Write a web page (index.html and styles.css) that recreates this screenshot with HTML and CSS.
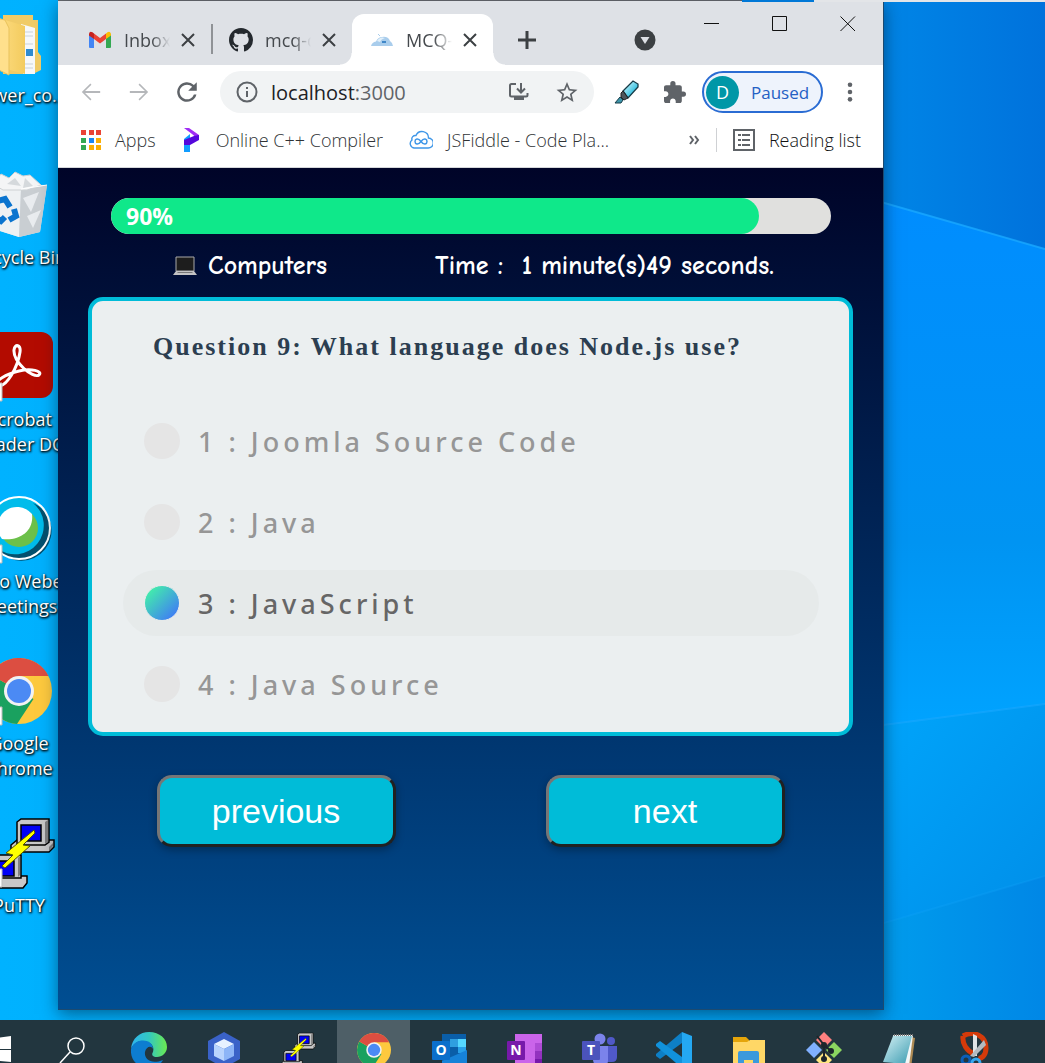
FILE: index.html
```html
<!DOCTYPE html>
<html lang="en">
<head>
<meta charset="utf-8">
<title>MCQ-App</title>
<meta name="viewport" content="width=device-width, initial-scale=1">
<link rel="stylesheet" href="styles.css">
</head>
<body>
<svg class="defs" aria-hidden="true">
  <defs>
    <linearGradient id="sky" x1="0" y1="0" x2="1" y2="0">
      <stop offset="0" stop-color="#00b2ff"/><stop offset=".5" stop-color="#00a8f4"/><stop offset=".86" stop-color="#009aec"/><stop offset="1" stop-color="#0087e6"/>
    </linearGradient>
    <linearGradient id="skyTop" x1="0" y1="0" x2="1" y2="0">
      <stop offset="0" stop-color="#0088e8"/><stop offset="1" stop-color="#0072dc"/>
    </linearGradient>
    <linearGradient id="beamA" x1="0" y1="0" x2="0" y2="1">
      <stop offset="0" stop-color="#008dff"/><stop offset=".65" stop-color="#0094f2"/><stop offset="1" stop-color="#00a3ff"/>
    </linearGradient>
    <linearGradient id="beamB" x1="0" y1="0" x2="1" y2="1">
      <stop offset="0" stop-color="#00a6fc"/><stop offset="1" stop-color="#008ee8"/>
    </linearGradient>
    <linearGradient id="folder" x1="0" y1="0" x2="1" y2="0">
      <stop offset="0" stop-color="#ffdf86"/><stop offset="1" stop-color="#f3cb5e"/>
    </linearGradient>
    <linearGradient id="pen" x1="0" y1="0" x2="1" y2="1">
      <stop offset=".2" stop-color="#b9f0fb"/><stop offset=".8" stop-color="#18b4d8"/>
    </linearGradient>
    <linearGradient id="edgeTop" x1="0" y1="0" x2="1" y2="0">
      <stop offset="0" stop-color="#2fb4f0"/><stop offset=".5" stop-color="#33c8c0"/><stop offset="1" stop-color="#6bea4f"/>
    </linearGradient>
    <linearGradient id="note" x1="0" y1="0" x2="1" y2="1">
      <stop offset="0" stop-color="#d5f1f5"/><stop offset="1" stop-color="#3a9bb0"/>
    </linearGradient>
    <symbol id="chrome" viewBox="0 0 66 66">
      <circle cx="33" cy="33" r="33" fill="#fdc93e"/>
      <path d="M33 33 4.500 16.500A33 33 0 0 0 31 66L47.500 41z" fill="#1aa15f"/>
      <path d="M33 33 4.500 16.500A33 33 0 0 1 62.500 18H33z" fill="#dc4e41"/>
      <circle cx="33" cy="33" r="15" fill="#f2f2f2"/>
      <circle cx="33" cy="33" r="12" fill="#4b8af4"/>
    </symbol>
    <symbol id="putty" viewBox="0 0 74 72">
      <g stroke="#000" stroke-width="1.500">
        <path d="M28 27 34 22H71V29L66 34H28z" fill="#c8c8c8"/>
        <path d="M34 4 38 1H66V24L62 27H34z" fill="#c8c8c8"/>
        <path d="M38 7H58V23H38z" fill="#0000f5"/>
        <path d="M1 63 6 58H44V65L40 70H1z" fill="#c8c8c8"/>
        <path d="M6 40 10 37H38V60H6z" fill="#c8c8c8"/>
        <path d="M10 43H31V58H10z" fill="#0000f5"/>
      </g>
      <path d="M62 4 65 2V24L62 26zM66 29 70 25V28L66 33zM35 40 37 38V57L35 59z" fill="#808080"/>
      <path d="M51 12 52 15 40 27 47 28 22 50 19 48 30 37 23 35z" fill="#ff0" stroke="#555500"/>
    </symbol>
  </defs>
</svg>

<main class="desktop">
  <svg class="wallpaper" viewBox="0 0 1045 1020" preserveAspectRatio="none" aria-hidden="true">
    <path fill="url(#sky)" d="M0 0H1045V1020H0z"/>
    <path fill="url(#skyTop)" d="M860 0H1045V249L860 196z"/>
    <path fill="url(#beamA)" d="M860 196 1045 249V704L860 728z"/>
    <path fill="url(#beamB)" d="M860 728 1045 704V876L860 930z"/>
    <g fill="none" stroke="#19a8ff" stroke-width="2"><path d="M860 196 1045 249" opacity=".8"/><path d="M860 728 1045 704" opacity=".6"/><path d="M860 930 1045 876" opacity=".2"/></g>
  </svg>

  <div class="top-edge"><span class="edge-dark"></span><span class="edge-blue"></span><span class="edge-light"></span></div>

  <div class="workspace">
    <nav class="shortcuts" aria-label="Desktop shortcuts">
      <a class="shortcut" href="#folder">
        <svg viewBox="0 0 72 72"><path d="M20 7H50V12H55V44L58 48V62L50 66H20z" fill="#f0cb67"/><path d="M38 16 52 20V66L40 66z" fill="#f6f8fa"/><path d="M42 24h8M42 28h8M42 36h8M42 56h8M42 60h8" stroke="#c9d2da"/><path d="M43 41h7v7h-7z" fill="#2f8bd0"/><path d="M12 9 42 18V66L20 60z" fill="url(#folder)"/><path d="M8 9 22 12 26 20V67L8 58z" fill="#ffe08c" stroke="#e9c35c"/></svg>
        <span>Power_co...</span>
      </a>
      <a class="shortcut" href="#bin">
        <svg viewBox="0 0 72 72"><path d="M6 14 64 15 57 62 36 67 14 60z" fill="#dfe4e8"/><path d="M6 14 38 19 36 67 14 60z" fill="#eef1f3"/><path d="M38 19 64 15 57 62 36 67z" fill="#c9ced2"/><path d="M40 28 56 22 48 42zM44 46 58 40 50 58z" fill="#e9ecef"/><path d="M10 14 18 4 26 8 32 2 40 6 47 5 58 15 44 20 20 20z" fill="#f4f5f6" stroke="#cdd1d4"/><path d="M24 14 32 8 38 16zM42 8 50 16 40 18z" fill="#d5d9dc"/><path d="M38 19 64 15" stroke="#fff"/><path d="M15 31 22 29 27 37M31 39 33 46 26 50M12 47 18 51 22 47" fill="none" stroke="#0a74cf" stroke-width="6"/></svg>
        <span>Recycle Bin</span>
      </a>
      <a class="shortcut" href="#acrobat">
        <svg viewBox="0 0 72 72"><rect x="4" width="66" height="66" rx="12" fill="#b30b00"/><path d="M14 54C10 49 24 42 36 39 48 36 60 39 56 43 50 47 30 30 31 18 32 11 38 13 37 20 35 34 24 56 14 54z" fill="none" stroke="#fff" stroke-width="3"/><path d="M1 51h18v18H1z" fill="#fff" stroke="#bbb"/></svg>
        <span>Acrobat<br>Reader DC</span>
      </a>
      <a class="shortcut" href="#webex">
        <svg viewBox="0 0 72 72"><circle cx="36" cy="34" r="31" fill="#00bceb"/><path d="M50 9A30 30 0 1 1 14 54 21 21 0 0 0 50 9z" fill="#04506e"/><circle cx="36" cy="34" r="19" fill="#6cc04a"/><path d="M49 20A19 19 0 0 0 19 45C38 47 51 36 49 20z" fill="#fff"/><circle cx="36" cy="34" r="31" fill="none" stroke="#fff" stroke-width="2"/><path d="M1 51h18v18H1z" fill="#fff" stroke="#bbb"/></svg>
        <span>Cisco Webex<br>Meetings</span>
      </a>
      <a class="shortcut" href="#chrome-app">
        <svg viewBox="0 0 72 72"><use href="#chrome" x="3" y="2" width="66" height="66"/><path d="M1 51h18v18H1z" fill="#fff" stroke="#bbb"/></svg>
        <span>Google<br>Chrome</span>
      </a>
      <a class="shortcut" href="#putty-app">
        <svg viewBox="0 0 72 72"><use href="#putty" width="74" height="72"/><path d="M1 51h18v18H1z" fill="#fff" stroke="#bbb"/></svg>
        <span>PuTTY</span>
      </a>
    </nav>

    <section class="window" aria-label="Browser window">
      <header class="tab-strip">
        <div class="tab">
          <svg viewBox="0 0 24 24"><path d="M1 5.500V19q0 1 1 1H6V10z" fill="#4285f4"/><path d="M18 10V20H22q1 0 1-1V5.500z" fill="#34a853"/><path d="M18 5.500V11L23 7.500V6Q22 2.500 19.500 4.200z" fill="#fbbc04"/><path d="M6 11V5.500L12 10 18 5.500V11L12 15.500z" fill="#ea4335"/><path d="M1 6V7.500L6 11V5.500L4.500 4.200Q1.500 2.500 1 6z" fill="#c5221f"/></svg>
          <span class="tab-title">Inbox (2)</span>
          <button class="tab-close" aria-label="Close tab"><svg viewBox="0 0 22 22"><path d="M5 5 17 17M17 5 5 17"/></svg></button>
        </div>
        <div class="tab tab-divided">
          <svg viewBox="0 0 16 16"><path fill="#24292e" d="M8 0C3.580 0 0 3.580 0 8c0 3.540 2.290 6.530 5.470 7.590.4.070.55-.17.55-.38 0-.19-.01-.82-.01-1.490-2.010.37-2.530-.49-2.690-.94-.09-.23-.48-.94-.82-1.130-.28-.15-.68-.52-.01-.53.63-.01 1.080.58 1.230.82.72 1.210 1.870.87 2.330.66.07-.52.28-.87.51-1.070-1.780-.2-3.640-.89-3.640-3.950 0-.87.31-1.590.82-2.150-.08-.2-.36-1.020.08-2.120 0 0 .67-.21 2.200.82.64-.18 1.320-.27 2-.27s1.360.09 2 .27c1.530-1.040 2.200-.82 2.200-.82.44 1.100.16 1.920.08 2.120.51.56.82 1.270.82 2.150 0 3.070-1.870 3.750-3.650 3.950.29.25.54.73.54 1.480 0 1.070-.01 1.930-.01 2.200 0 .21.15.46.55.38A8.010 8.010 0 0 0 16 8c0-4.420-3.580-8-8-8z"/></svg>
          <span class="tab-title">mcq-demo</span>
          <button class="tab-close" aria-label="Close tab"><svg viewBox="0 0 22 22"><path d="M5 5 17 17M17 5 5 17"/></svg></button>
        </div>
        <div class="tab tab-active">
          <svg viewBox="0 0 24 24"><path d="M1 18Q2 14 6 13.500 8 9 12 9 18 8 20 13 23 15 23 18z" fill="#a9cdec"/><path d="M7 13Q10 8 15 10 11 11 10 14z" fill="#e2f0fa"/><path d="M12 13h4v2h-4z" fill="#3f87c8"/><path d="M8 6l2 2" stroke="#a9cdec"/></svg>
          <span class="tab-title">MCQ-App</span>
          <button class="tab-close" aria-label="Close tab"><svg viewBox="0 0 22 22"><path d="M5 5 17 17M17 5 5 17"/></svg></button>
        </div>
        <button class="new-tab" aria-label="New tab"><svg viewBox="0 0 20 20"><path d="M10 1V19M1 10H19"/></svg></button>
        <button class="tab-search" aria-label="Search tabs"><svg viewBox="0 0 22 22"><circle cx="11" cy="11" r="10.500" fill="#3c4043"/><path d="M6.500 8H15.500L11 15z" fill="#dee1e6"/></svg></button>
        <div class="controls">
          <button aria-label="Minimize"><svg viewBox="0 0 16 16"><path d="M0 7.500H15"/></svg></button>
          <button aria-label="Maximize"><svg viewBox="0 0 16 16"><path d="M.5 .5H14.500V14.500H.5z"/></svg></button>
          <button aria-label="Close"><svg viewBox="0 0 16 16"><path d="M.5 .5 15 15M15 .5 .5 15"/></svg></button>
        </div>
      </header>

      <div class="toolbar">
        <button class="tool faded" aria-label="Back"><svg viewBox="0 0 24 24"><path d="M22 11H5.500L12.500 4 11.300 2.700 2 12l9.300 9.300 1.200-1.300-7-7H22z"/></svg></button>
        <button class="tool faded" aria-label="Forward"><svg viewBox="0 0 24 24"><path d="M2 11H18.500L11.500 4 12.700 2.700 22 12l-9.300 9.300-1.200-1.300 7-7H2z"/></svg></button>
        <button class="tool" aria-label="Reload"><svg viewBox="3 3 18 18"><path d="M17.650 6.350A8 8 0 1 0 19.730 14h-2.080A6 6 0 1 1 12 6c1.660 0 3.140.69 4.220 1.780L13 11h7V4z"/></svg></button>
        <div class="omnibox">
          <svg viewBox="0 0 22 22"><circle cx="11" cy="11" r="9.500" fill="none" stroke="#5f6368" stroke-width="2"/><path d="M10 10h2v6h-2zM10 6h2v2h-2z"/></svg>
          <span class="address"><b>localhost</b>:3000</span>
          <button aria-label="Install app"><svg viewBox="0 0 22 22"><path d="M8 3H3.500Q2 3 2 4.500V14q0 1.500 1.500 1.500H18q1.500 0 1.500-1.500V12M13 2V11M9 7.500 13 11.500 17 7.500" fill="none" stroke="#5f6368" stroke-width="2"/><path d="M6 16h10v3H6z"/></svg></button>
          <button aria-label="Bookmark this page"><svg viewBox="2 1 20 21"><path d="M22 9.240l-7.190-.62L12 2 9.190 8.630 2 9.240l5.460 4.730L5.820 21 12 17.270 18.180 21l-1.630-7.030zM12 15.400l-3.760 2.270 1-4.280-3.320-2.880 4.380-.38L12 6.100l1.710 4.040 4.380.38-3.320 2.880 1 4.280z"/></svg></button>
        </div>
        <button class="tool" aria-label="Highlighter"><svg class="wide" viewBox="0 0 26 26"><path d="M9 12 19 2 24 5V8L14 19z" fill="url(#pen)" stroke="#173b47" stroke-width="1.300"/><path d="M9 12 14 19 10 21 7 18V14z" fill="#4c555b" stroke="#222"/><path d="M6 18 9 21 7 24H1z" fill="#3d95aa" stroke="#173b47"/></svg></button>
        <button class="tool" aria-label="Extensions"><svg viewBox="2 1 21 21"><path d="M20.500 11H19V7c0-1.100-.9-2-2-2h-4V3.500a2.500 2.500 0 0 0-5 0V5H4c-1.100 0-2 .9-2 2v3.800h1.500c1.490 0 2.700 1.210 2.700 2.700s-1.210 2.700-2.700 2.700H2V20c0 1.100.9 2 2 2h3.800v-1.500c0-1.490 1.210-2.700 2.700-2.700s2.700 1.210 2.700 2.700V22H17c1.100 0 2-.9 2-2v-4h1.500a2.500 2.500 0 0 0 0-5z"/></svg></button>
        <button class="profile"><span class="avatar">D</span><span class="profile-state">Paused</span></button>
        <button class="tool" aria-label="Menu"><svg viewBox="0 0 24 24"><circle cx="12" cy="4" r="2.500"/><circle cx="12" cy="12" r="2.500"/><circle cx="12" cy="20" r="2.500"/></svg></button>
      </div>

      <nav class="bookmarks" aria-label="Bookmarks">
        <a href="#apps"><svg class="i20" viewBox="0 0 20 20"><path d="M0 0h5v5H0zM8 0h5v5H8zM15 0h5v5h-5z" fill="#ea4335"/><path d="M0 8h5v5H0zM0 15h5v5H0z" fill="#34a853"/><path d="M8 8h5v5H8z" fill="#1a87f4"/><path d="M15 8h5v5h-5zM8 15h5v5H8zM15 15h5v5h-5z" fill="#fbaf04"/></svg>Apps</a>
        <a href="#cpp"><svg class="i20" viewBox="0 0 20 24"><path d="M2 11 8 6V24H2z" fill="#119dff"/><path d="M2 0H7L17 7V12L10 6z" fill="#a02df5"/><path d="M2 17V12L12 8 17 7V12L8 17z" fill="#5507dc"/></svg>Online C++ Compiler</a>
        <a href="#jsfiddle"><svg class="i24" viewBox="0 0 24 24"><path d="M5 20a4.500 4.500 0 0 1-2-8 3.500 3.500 0 0 1 4-4.500A6.500 6.500 0 0 1 19.500 10 5 5 0 0 1 19 20z" fill="none" stroke="#3f97e8" stroke-width="1.400"/><path d="M12 13.500C9 9.500 6 11 6 13.500S9 17.500 12 13.500 18 11 18 13.500 15 17.500 12 13.500z" fill="none" stroke="#3f97e8" stroke-width="1.500"/></svg>JSFiddle - Code Pla...</a>
        <button class="overflow" aria-label="More bookmarks"><svg viewBox="0 0 12 12"><path d="M2 2 5 6 2 10M7 2 10 6 7 10"/></svg></button>
        <a class="reading" href="#reading"><svg class="i22" viewBox="0 0 22 22"><path d="M1 1H21V21H1z" fill="none" stroke="#5f6368" stroke-width="2"/><path d="M5 5h3v2H5zM5 10h3v2H5zM5 15h3v2H5zM9 5h8v2H9zM9 10h8v2H9zM9 15h8v2H9z" fill="#5f6368"/></svg>Reading list</a>
      </nav>

      <div class="page">
        <div class="progress" role="progressbar" aria-valuenow="90" aria-valuemin="0" aria-valuemax="100">
          <div class="progress-fill" style="width:90%">90%</div>
        </div>
        <div class="info">
          <span class="category"><svg viewBox="0 0 26 20"><path d="M4 1H22V15H4z" fill="#1d1d1d" stroke="#a9a9a9"/><path d="M4 15H22L25 19H1z" fill="#c3c3c3"/><path d="M6 16h14l1 1H5z" fill="#777"/></svg>Computers</span>
          <span class="timer">Time :&nbsp; 1 minute(s)49 seconds.</span>
        </div>
        <form class="card">
          <h1 class="question">Question 9: What language does Node.js use?</h1>
          <label class="option"><input type="radio" name="answer">1 : Joomla Source Code</label>
          <label class="option"><input type="radio" name="answer">2 : Java</label>
          <label class="option"><input type="radio" name="answer" checked>3 : JavaScript</label>
          <label class="option"><input type="radio" name="answer">4 : Java Source</label>
        </form>
        <div class="actions">
          <button type="button">previous</button>
          <button type="button">next</button>
        </div>
      </div>
    </section>
  </div>
</main>

<footer class="taskbar">
  <button aria-label="Start"><svg viewBox="0 0 36 36"><path d="M6 7 17 5.500V17H6zM18 5.500 30 4V17H18zM6 18H17V29L6 28zM18 18H30V30L18 29z" fill="#fff"/></svg></button>
  <button aria-label="Search"><svg viewBox="0 0 36 36"><circle cx="20" cy="14" r="8" fill="none" stroke="#fff" stroke-width="1.500"/><path d="M14 20 4 31" stroke="#fff" stroke-width="1.500"/></svg></button>
  <button aria-label="Edge"><svg viewBox="0 0 36 36"><path d="M0 17C1 6 9 0 18 0 29 0 36 7 36 15 36 21 31 25 26 25 22 25 20 23 22 20 24 14 19 9 12 9 6 9 2 12 0 17z" fill="url(#edgeTop)"/><path d="M0 17C2 11 7 8.500 12 8.500 18 8.500 22 12 22 17 20 13 15 15 14 20 13 27 20 33 32 28 29 34 23 36 18 36 7 36-1 28 0 17z" fill="#0d7dd0"/></svg></button>
  <button aria-label="Virtual machine"><svg viewBox="0 0 36 36"><path d="M18 0 34 9V27L18 36 2 27V9z" fill="#3a62c8"/><path d="M18 7 28 12 18 17 8 12z" fill="#e8f2ff"/><path d="M8 12 18 17V29L8 24z" fill="#b9d4fd"/><path d="M28 12 18 17V29L28 24z" fill="#8db5f7"/></svg></button>
  <button aria-label="PuTTY"><svg viewBox="0 0 74 72"><use href="#putty" width="74" height="72"/></svg></button>
  <button class="running" aria-label="Chrome"><svg viewBox="0 0 36 36"><use href="#chrome" x="1" y="1" width="34" height="34"/></svg></button>
  <button aria-label="Outlook"><svg viewBox="0 0 36 36"><path d="M11 2H35V30H11z" fill="#0a5ea8"/><path d="M19 7h8v8h-8z" fill="#2f9fe0"/><path d="M27 7h8v8h-8z" fill="#55d8ff"/><path d="M27 15h8v6h-8z" fill="#28a0e8"/><path d="M11 29 36 18V36H11z" fill="#1682d8"/><rect x="1" y="9" width="18" height="19" rx="1" fill="#0b6fcb"/><text x="10" y="23" text-anchor="middle">O</text></svg></button>
  <button aria-label="OneNote"><svg viewBox="0 0 36 36"><path d="M9 2H36V36H9z" fill="#ca64ea"/><path d="M29 11h7v8h-7z" fill="#ae4bd5"/><path d="M29 19h7v8h-7z" fill="#9332bf"/><path d="M29 27h7v9h-7z" fill="#7719aa"/><rect x="1" y="9" width="18" height="19" rx="1" fill="#7719aa"/><text x="10" y="23" text-anchor="middle">N</text></svg></button>
  <button aria-label="Teams"><svg viewBox="0 0 36 36"><circle cx="30" cy="9" r="4" fill="#5059c9"/><circle cx="19" cy="7" r="5.500" fill="#7b83eb"/><path d="M26 14H36V25q0 5-5 5h-5z" fill="#5059c9"/><path d="M12 14H27V28q0 7-7 7t-8-7z" fill="#7b83eb"/><rect x="1" y="9" width="18" height="19" rx="1" fill="#4b53bc"/><text x="10" y="23" text-anchor="middle">T</text></svg></button>
  <button aria-label="Visual Studio Code"><svg viewBox="0 0 36 36"><path d="M26 0 36 4V32L26 36z" fill="#24a8f2"/><path d="M26 0V11L4 27 0 24V22z" fill="#0d7fc6"/><path d="M26 36V25L4 9 0 12V14z" fill="#1192dc"/></svg></button>
  <button aria-label="File Explorer"><svg viewBox="0 0 36 36"><path d="M2 5h13l3 3v3H2z" fill="#e5a50a"/><path d="M2 10 16 10 19 8H34V32H2z" fill="#ffd766"/><path d="M7 36V21q0-2 2-2H26q2 0 2 2V36H22V28H13V36z" fill="#3b99dc"/></svg></button>
  <button aria-label="Git Bash"><svg viewBox="0 0 36 36"><path d="M18 0 26 8 18 16 10 8z" fill="#ff8080"/><path d="M8 10 16 18 8 26 0 18z" fill="#80b0ff"/><path d="M28 10 36 18 28 26 20 18z" fill="#8bd560"/><path d="M18 20 26 28 18 36 10 28z" fill="#ffe680"/><path d="M11 4 18 13V28M18 13 25 19" stroke="#1c262b" stroke-width="2" fill="none"/><circle cx="18" cy="27" r="3" fill="#1c262b"/><circle cx="25" cy="19" r="3" fill="#1c262b"/><circle cx="18" cy="13" r="3" fill="#1c262b"/></svg></button>
  <button aria-label="Notepad"><svg viewBox="0 0 36 36"><path d="M30 5 34 6 30 36H26z" fill="#ae8b54"/><path d="M12 3H32L28 34 22 36z" fill="#f3f7f8"/><path d="M12 4H31L24 32 2 30z" fill="url(#note)"/><path d="M13 3h19" stroke="#777" stroke-width="2" stroke-dasharray="1 1"/></svg></button>
  <button aria-label="Snipping Tool"><svg viewBox="0 0 36 36"><path d="M7 4C18-2 30 4 30 16 30 24 25 27 22 26M7 4C6 12 11 19 18 22" fill="none" stroke="#d43a0a" stroke-width="5"/><path d="M17 2 21 4V24H17z" fill="#dfe3e6"/><path d="M28 8 14 24 18 25 30 13z" fill="#b4babf"/><circle cx="10" cy="28" r="4" fill="none" stroke="#0b5fb8" stroke-width="3"/><circle cx="20" cy="31" r="4" fill="none" stroke="#35a7ee" stroke-width="3"/></svg></button>
</footer>
</body>
</html>
```
FILE: styles.css
```css
* { box-sizing: border-box; }

body {
  margin: 0;
  height: 100vh;
  min-height: 640px;
  display: flex;
  flex-direction: column;
  overflow: hidden;
  font-family: "Open Sans", "Noto Sans", sans-serif;
  font-size: 18px;
}

button {
  margin: 0;
  padding: 0;
  border: 0;
  background: none;
  font: inherit;
  color: inherit;
}

svg { flex: none; }
a { color: inherit; text-decoration: none; }
.defs { position: absolute; width: 0; height: 0; }

/* Desktop */
.desktop {
  position: relative;
  flex: 1;
  min-height: 0;
  display: flex;
  flex-direction: column;
  overflow: hidden;
}
.wallpaper { position: absolute; inset: 0; width: 100%; height: 100%; }

.top-edge { position: relative; display: flex; height: 1px; padding-left: 58px; }
.edge-dark { flex: 1; background: #6b6c6f; }
.edge-blue { width: 72px; height: 2px; background: #0078d7; z-index: 1; }
.edge-light { width: 231px; height: 2px; background: #e3e5e8; z-index: 1; }

.workspace {
  position: relative;
  flex: 1;
  min-height: 0;
  display: flex;
  padding: 0 161px 10px 0;
}

.shortcuts {
  flex: none;
  width: 58px;
  padding-top: 7px;
  overflow: hidden;
  display: grid;
  grid-auto-rows: 162px;
  align-content: start;
}
.shortcut {
  width: 122px;
  margin-left: -42px;
  display: flex;
  flex-direction: column;
  align-items: center;
  color: #fff;
  line-height: 25px;
  text-align: center;
  text-shadow: 1px 1px 2px #000, 0 1px 3px #000;
}
.shortcut svg { width: 72px; height: 72px; margin-bottom: 3px; }

/* Browser window */
.window {
  flex: 1;
  min-width: 0;
  display: flex;
  flex-direction: column;
  border-right: 1px solid #1c4a70;
  border-bottom: 1px solid #1c4a70;
  background: #fff;
  box-shadow: 0 4px 16px rgba(0, 20, 40, .5);
}

.tab-strip {
  flex: none;
  height: 64px;
  padding-left: 12px;
  display: flex;
  align-items: flex-end;
  background: #dee1e6;
}
.tab {
  position: relative;
  width: 141px;
  height: 51px;
  padding-left: 18px;
  display: flex;
  align-items: center;
  color: #45494d;
}
.tab > svg { width: 24px; height: 24px; }
.tab-title {
  width: 46px;
  margin: 0 7px 0 12px;
  overflow: hidden;
  white-space: nowrap;
  mask-image: linear-gradient(90deg, #000 60%, transparent);
}
.tab-close { width: 22px; height: 22px; }
.tab-close svg { display: block; stroke: #3c4043; stroke-width: 2; }
.tab-divided::before {
  content: "";
  position: absolute;
  left: 0;
  top: 10px;
  width: 2px;
  height: 30px;
  background: #8f9296;
}
.tab-active { background: #fff; border-radius: 12px 12px 0 0; }
.tab-active::before,
.tab-active::after {
  content: "";
  position: absolute;
  bottom: 0;
  width: 12px;
  height: 12px;
}
.tab-active::before { left: -12px; background: radial-gradient(circle at 0 0, #dee1e6 11px, #fff 12px); }
.tab-active::after { right: -12px; background: radial-gradient(circle at 100% 0, #dee1e6 11px, #fff 12px); }

.new-tab { width: 44px; height: 51px; margin-left: 12px; display: grid; place-items: center; }
.new-tab svg { width: 20px; height: 20px; stroke: #3c4043; stroke-width: 3; }
.tab-search { width: 22px; height: 51px; margin: 0 22px 0 auto; display: grid; place-items: center; }
.tab-search svg { width: 22px; height: 22px; }
.controls { align-self: flex-start; display: flex; padding-right: 1px; }
.controls button { width: 68px; height: 45px; display: grid; place-items: center; }
.controls svg { width: 16px; height: 16px; fill: none; stroke: #111; }

.toolbar {
  flex: none;
  height: 54px;
  padding: 0 9px;
  display: flex;
  align-items: center;
}
.tool { width: 48px; height: 42px; display: grid; place-items: center; }
.tool svg { width: 22px; height: 22px; fill: #5f6368; }
.tool svg.wide { width: 26px; height: 26px; }
.faded svg { fill: #b5b7ba; }
.omnibox {
  flex: 1;
  min-width: 0;
  height: 42px;
  margin: 0 9px;
  padding: 0 16px;
  display: flex;
  align-items: center;
  border-radius: 21px;
  background: #f1f3f4;
}
.omnibox svg { display: block; width: 22px; height: 22px; fill: #5f6368; }
.omnibox button { margin-left: 26px; }
.address { flex: 1; min-width: 0; padding-left: 13px; font-size: 20px; color: #5f6368; }
.address b { font-weight: 400; color: #202124; }
.profile {
  width: 121px;
  height: 42px;
  margin: 0 3px;
  padding: 0 2px;
  display: flex;
  align-items: center;
  border: 2px solid #2a6cd3;
  border-radius: 21px;
  background: #eef3fc;
  color: #2460c4;
}
.profile-state { font-size: 17px; }
.avatar {
  width: 33px;
  height: 33px;
  margin-right: 12px;
  border-radius: 50%;
  background: #0097a7;
  color: #fff;
  line-height: 33px;
  text-align: center;
}

.bookmarks {
  flex: none;
  height: 49px;
  padding: 0 22px 7px 23px;
  display: flex;
  align-items: center;
  gap: 26px;
  border-bottom: 1px solid #d5d7da;
  color: #303336;
  font-weight: 300;
  white-space: nowrap;
}
.bookmarks a { display: flex; align-items: center; gap: 14px; }
.i20 { width: 20px; height: 24px; }
.i22 { width: 22px; height: 22px; }
.i24 { width: 24px; height: 24px; }
.overflow { width: 12px; height: 24px; margin: 0 -10px 0 auto; }
.overflow svg { display: block; width: 12px; height: 24px; fill: none; stroke: #5f6368; stroke-width: 2; }
.bookmarks .reading { height: 24px; padding-left: 16px; border-left: 1px solid #cfd1d4; color: #101112; }

/* Quiz page */
.page {
  flex: 1;
  min-height: 0;
  padding: 30px 30px 0;
  background: linear-gradient(#000428, #004e92);
}
.progress {
  height: 36px;
  margin: 0 22px 0 23px;
  border-radius: 18px;
  background: #e0e0de;
  overflow: hidden;
}
.progress-fill {
  height: 36px;
  padding-left: 15px;
  border-radius: 18px;
  background: #0fe88a;
  color: #fff;
  font-size: 23px;
  font-weight: 700;
  line-height: 36px;
}
.info {
  height: 63px;
  padding: 0 79px 0 84px;
  display: flex;
  align-items: center;
  justify-content: space-between;
  color: #fff;
  font-family: "Comic Sans MS", "Comic Neue", "Noto Sans", sans-serif;
  font-size: 26px;
  font-weight: 700;
  white-space: nowrap;
}
.category { display: flex; align-items: center; gap: 10px; }
.category svg { width: 26px; height: 20px; }

.card {
  padding: 30px 30px 15px 31px;
  display: grid;
  gap: 15px;
  border: 4px solid #00bcd8;
  border-radius: 15px;
  background: #ebeff0;
}
.question {
  margin: 0 0 30px;
  padding-left: 30px;
  color: #2c3e50;
  font-family: "Liberation Serif", "Times New Roman", serif;
  font-size: 26px;
  font-weight: 700;
  letter-spacing: 2px;
  line-height: 32px;
}
.option {
  height: 66px;
  padding-left: 21px;
  display: flex;
  align-items: center;
  gap: 18px;
  border-radius: 33px;
  color: #969696;
  font-family: "Noto Sans", sans-serif;
  font-size: 27px;
  font-weight: 500;
  letter-spacing: 4px;
}
.option input {
  appearance: none;
  width: 36px;
  height: 36px;
  margin: 0;
  border-radius: 50%;
  background: #e5e5e5;
}
.option:has(input:checked) { background: #e6eaea; color: #666; }
.option input:checked {
  border: 1px solid #e6eaea;
  background: linear-gradient(135deg, #43ffa0, #3f6cff);
}

.actions { margin-top: 39px; display: flex; justify-content: center; gap: 150px; }
.actions button {
  width: 239px;
  height: 72px;
  border: 3px solid;
  border-color: #767676 #212121 #212121 #767676;
  border-radius: 15px;
  background: #00bcd8;
  box-shadow: 0 3px 8px rgba(0, 0, 0, .3);
  color: #fff;
  font-family: "Liberation Sans", Arial, sans-serif;
  font-size: 34px;
}

/* Taskbar */
.taskbar {
  flex: none;
  height: 43px;
  margin-left: -38px;
  display: flex;
  gap: 2px;
  overflow: hidden;
  background: #22363f;
}
.taskbar button { flex: none; width: 73px; height: 43px; padding-top: 12px; overflow: hidden; }
.taskbar .running { background: #4e5f67; }
.taskbar svg { display: block; width: 36px; height: 36px; margin: 0 auto; }
.taskbar text { fill: #fff; font-family: "Open Sans", sans-serif; font-size: 14px; font-weight: 700; }
```
